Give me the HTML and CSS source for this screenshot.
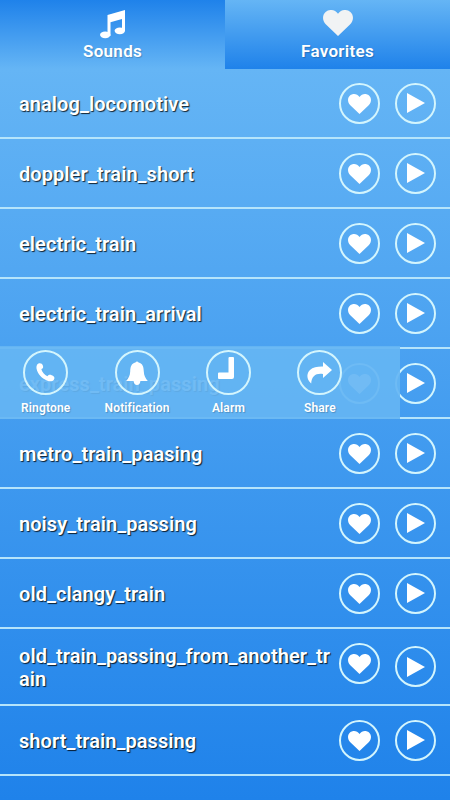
FILE: index.html
```html
<!DOCTYPE html>
<html lang="en">
<head>
    <meta charset="UTF-8">
    <meta name="viewport" content="width=device-width, initial-scale=1.0">
    <title>Train Sounds</title>
    <link rel="stylesheet" href="styles.css">
</head>
<body>
    <!-- Shared icons -->
    <svg class="sprite" width="0" height="0">
        <symbol id="heart" viewBox="0 0 30 26">
            <path d="M15 26 L3 14.5 C-1 10.5 -.8 5 2.6 2 C6.3 -1.2 12 -.6 15 3.8 C18 -.6 23.7 -1.2 27.4 2 C30.8 5 31 10.5 27 14.5 Z"/>
        </symbol>
        <symbol id="play" viewBox="0 0 18 20">
            <path d="M0 0 L18 10 L0 20 Z"/>
        </symbol>
    </svg>

    <!-- Tabs -->
    <div class="tabs">
        <div class="tab active">
            <svg class="tab-icon" viewBox="0 0 28 30">
                <path d="M8.5 5 L26 0 V21 H23 V9 L11.5 12.3 V26 H8.5 Z"/>
                <ellipse cx="6.2" cy="24.8" rx="5.2" ry="3.4"/>
                <ellipse cx="20.8" cy="20.8" rx="5.2" ry="3.4"/>
            </svg>
            <span>Sounds</span>
        </div>
        <div class="tab">
            <svg class="tab-icon fav" viewBox="0 0 30 26"><use href="#heart"/></svg>
            <span>Favorites</span>
        </div>
    </div>

    <!-- Sound list -->
    <div class="list" id="list"></div>

    <script>
        const sounds = [
            'analog_locomotive',
            'doppler_train_short',
            'electric_train',
            'electric_train_arrival',
            'express_train_passing',
            'metro_train_paasing',
            'noisy_train_passing',
            'old_clangy_train',
            'old_train_passing_from_another_train',
            'short_train_passing'
        ];
        const openItem = 'express_train_passing';

        // Options shown over the open row
        const menu = `
            <div class="menu">
                <div class="option">
                    <div class="circle big"><svg width="19" height="19" viewBox="0 0 20 20"><path d="M2.2 .8 C4 -.2 6.5 .2 7.2 2.5 C7.8 4.6 7.6 5.4 5.6 6.4 C6.3 9.5 9 12.8 12 14 C13.5 12.2 14.5 12 16.5 12.8 C19.5 14 20 15.5 18.8 17.6 C17.5 19.6 14.5 19.8 11.5 18.4 C6 16 1.8 11.5 .6 6 C.2 3.6 .8 1.6 2.2 .8 Z"/></svg></div>
                    <span>Ringtone</span>
                </div>
                <div class="option">
                    <div class="circle big"><svg width="22" height="24" viewBox="0 0 22 24"><path d="M9.4 1.6 Q11 -.8 12.6 1.6 C16.8 2.6 17.6 6 17.8 10.5 C18 15 19.5 17 21.8 20 H14.4 Q14 24 11 24 Q8 24 7.6 20 H.2 C2.5 17 4 15 4.2 10.5 C4.4 6 5.2 2.6 9.4 1.6 Z"/></svg></div>
                    <span>Notification</span>
                </div>
                <div class="option">
                    <div class="circle big alarm"><svg width="16" height="22" viewBox="0 0 16 22"><path d="M11.5 0 H15 Q16 0 16 1 V20 Q16 22 14 22 H1 Q0 22 0 21 V16.5 Q0 15.5 1 15.5 H10.5 V1 Q10.5 0 11.5 0 Z"/></svg></div>
                    <span>Alarm</span>
                </div>
                <div class="option">
                    <div class="circle big"><svg width="25" height="22" viewBox="0 0 25 22"><path d="M16 0 L25 8 L16 16 V12 C9 11 4.5 14 4.2 21.5 C-.5 18 -.8 11.5 3 8 C6 5 10.5 4.4 16 4.5 Z"/></svg></div>
                    <span>Share</span>
                </div>
            </div>`;

        document.getElementById('list').innerHTML = sounds.map(name => `
            <div class="row${name.length > 30 ? ' tall' : ''}">
                <div class="name">${name}</div>
                <div class="circle fav-btn"><svg width="23" height="20"><use href="#heart"/></svg></div>
                <div class="circle play"><svg width="18" height="20"><use href="#play"/></svg></div>
                ${name === openItem ? menu : ''}
            </div>`).join('');
    </script>
</body>
</html>
```
FILE: styles.css
```css
* {
    box-sizing: border-box;
}

body {
    margin: 0;
    height: 800px;
    overflow: hidden;
    background: linear-gradient(#65b5f5 69px, #1f82ea 100%);
    font-family: Roboto, sans-serif;
    font-weight: 600;
    color: #fff;
}

svg {
    fill: #fff;
    display: block;
}

.sprite {
    position: absolute;
}

.tabs {
    display: flex;
    height: 69px;
}

.tab {
    flex: 1;
    display: flex;
    flex-direction: column;
    align-items: center;
    padding-top: 10px;
    font-size: 17px;
    line-height: 23px;
    letter-spacing: 0.3px;
    background: linear-gradient(#65b5f5, #1f82ea);
    text-shadow: 1px 1px 1px rgba(0, 0, 0, 0.2);
}

.tab.active {
    background: linear-gradient(#1f82ea, #65b5f5);
}

.tab-icon {
    width: 28px;
    height: 30px;
}

.tab-icon.fav {
    width: 30px;
    height: 26px;
    margin-bottom: 4px;
    fill: #f1f3f4;
}

.row {
    position: relative;
    display: flex;
    align-items: center;
    height: 70px;
    padding: 0 14px 0 19px;
    border-bottom: 2px solid #b5e4fb;
}

.row.tall {
    height: 77px;
}

.name {
    width: 312px;
    margin-right: 8px;
    padding-top: 2px;
    font-size: 20px;
    line-height: 23px;
    letter-spacing: 0.06px;
    word-break: break-all;
    text-shadow: 1px 1px 1px rgba(0, 0, 0, 0.8);
}

.circle {
    display: flex;
    flex: none;
    justify-content: center;
    align-items: center;
    width: 41px;
    height: 41px;
    border: 2px solid #d3f5fd;
    border-radius: 50%;
}

.fav-btn svg {
    margin-top: 1px;
}

.circle.play {
    margin-left: 15px;
}

.play svg {
    margin-left: 1px;
}

.row.tall .circle {
    margin-bottom: 6px;
}

.row.tall .play {
    margin-bottom: 0;
}

/* Popup over the open row */
.menu {
    position: absolute;
    left: 0;
    top: -3px;
    width: 400px;
    height: 73px;
    display: flex;
    background: rgba(101, 181, 243, 0.92);
}

.option {
    width: 91.4px;
    display: flex;
    flex-direction: column;
    align-items: center;
    padding-top: 4px;
    font-size: 12px;
    line-height: 16px;
    letter-spacing: 0.15px;
    text-shadow: 1px 1px 1px rgba(0, 0, 0, 0.2);
}

.circle.big {
    width: 45px;
    height: 45px;
    margin-bottom: 5px;
}

.alarm svg {
    margin: -10px 5px 0 0;
}
```
